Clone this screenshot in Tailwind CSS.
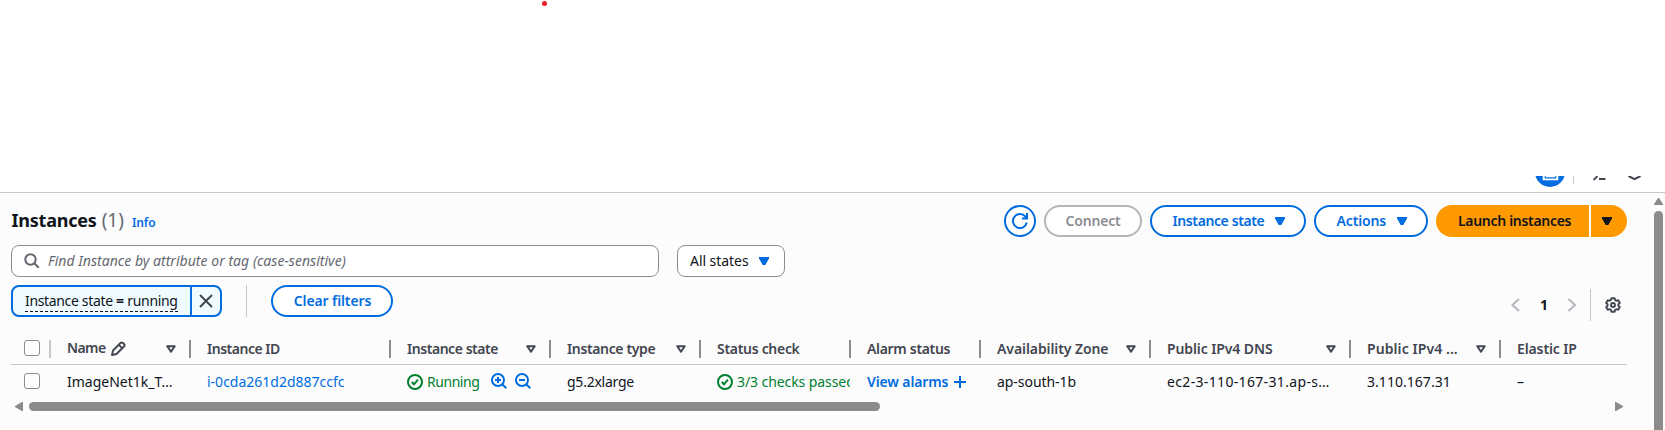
<!DOCTYPE html>
<html lang="en">
<head>
<meta charset="utf-8">
<title>Instances</title>
<script src="https://cdn.jsdelivr.net/npm/@tailwindcss/browser@4"></script>
</head>
<body class="w-[1665px] h-[430px] overflow-hidden bg-white font-['Noto_Sans',sans-serif] text-sm leading-5 text-[#0f141a]">
<svg width="0" height="0" class="absolute">
  <symbol id="down" viewBox="0 0 10 8"><path d="M0 0h10v1.500L6.300 8H3.700L0 1.500z" fill="currentColor"/></symbol>
  <symbol id="sort" viewBox="0 0 10 8"><path d="M1.300 1.200h7.400L5 6.800z" fill="none" stroke="currentColor" stroke-width="2" stroke-linejoin="round"/></symbol>
  <symbol id="ok" viewBox="0 0 16 16"><g fill="none" stroke="currentColor" stroke-width="2"><circle cx="8" cy="8" r="7"/><path d="M4.800 8l2.200 2.300 4-4.600"/></g></symbol>
</svg>

<!-- blank area above the console -->
<div class="h-[176px] pl-[542px] pt-px"><div class="size-[5px] rounded-full bg-[#ee1c25]"></div></div>

<!-- lower edge of the navigation bar -->
<div class="h-[17px] border-b border-[#c6c6cd] flex items-start pl-[1535px] overflow-hidden">
  <svg width="30" height="12" viewBox="0 0 30 12"><circle cx="15" cy="-4" r="15" fill="#006ce0"/><path d="M7.700 0h15.600v4.300H7.700z" fill="#fff"/><path d="M9.700 0v2.600h11.600V0h-1v1.200h-9.600V0z" fill="#006ce0"/></svg>
  <div class="w-px h-2 bg-[#c6c6cd] ml-2"></div>
  <svg class="ml-[18px]" width="15" height="6" viewBox="0 0 15 6" fill="none" stroke="#424650" stroke-width="1.800"><path d="M1.500 4L5.500 0M7 3h6.500"/></svg>
  <svg class="ml-[21px]" width="13" height="5" viewBox="0 0 13 5" fill="none" stroke="#424650" stroke-width="2"><path d="M.5 0L6.500 3.200L12.500 0"/></svg>
</div>

<main class="flex h-[237px] bg-[#fcfcfd]">
  <section class="ml-[11px] w-[1616px]">
    <!-- title and actions -->
    <div class="pt-3 flex h-11 items-center">
      <h1 class="text-[18px] font-bold leading-6 whitespace-pre -tracking-[0.22px] pl-[0.5px] -mt-0.5">Instances</h1>
      <span class="text-[19px] leading-6 text-[#656871] ml-[5px] -mt-0.5">(1)</span>
      <a class="text-xs font-semibold text-[#006ce0] ml-2 mt-1 -tracking-[0.1px]">Info</a>
      <div class="ml-auto flex gap-2 font-semibold text-[#006ce0]">
        <button class="size-8 rounded-full border-2 border-[#006ce0] bg-white flex items-center justify-center"><svg width="16" height="16" viewBox="0 0 16 16" fill="none" stroke="currentColor" stroke-width="2"><path d="M14.800 9.500A7 7 0 1 1 13.300 3.500L15 5.500"/><path d="M15 0v5.500h-5"/></svg></button>
        <button class="w-[98px] h-8 rounded-full border-2 border-[#b4b4bb] bg-white text-[#8c8c94] -tracking-[0.2px]">Connect</button>
        <button class="w-[156px] h-8 rounded-full border-2 border-[#006ce0] bg-white flex items-center pl-[20.500px]"><span class="-tracking-[0.39px] w-[102px] text-left">Instance state</span><svg width="10" height="8"><use href="#down"/></svg></button>
        <button class="w-[114px] h-8 rounded-full border-2 border-[#006ce0] bg-white flex items-center pl-[20.500px]"><span class="-tracking-[0.15px] w-[60.500px] text-left">Actions</span><svg width="10" height="8"><use href="#down"/></svg></button>
        <div class="flex gap-[2px] text-[#0f141a]">
          <button class="w-[153px] h-8 rounded-l-full bg-[#ff9900] -tracking-[0.3px] text-left pl-[22px]">Launch instances</button>
          <button class="w-9 h-8 rounded-r-full bg-[#ff9900] flex items-center pl-[11px]"><svg width="10" height="8"><use href="#down"/></svg></button>
        </div>
      </div>
    </div>

    <!-- search -->
    <div class="flex mt-2 gap-[18px]">
      <div class="w-[648px] h-8 rounded-lg border border-[#8c8c94] bg-white flex items-center pl-3 text-[#656871]">
        <svg width="16" height="16" viewBox="0 0 16 16" fill="none" stroke="currentColor" stroke-width="2"><circle cx="6.500" cy="6.500" r="5.200"/><path d="M10.300 10.300l4.500 4.500"/></svg>
        <span class="italic ml-2 tracking-[0.03px]">Find Instance by attribute or tag (case-sensitive)</span>
      </div>
      <div class="w-[108px] h-8 rounded-lg border border-[#8c8c94] bg-white flex items-center pl-3"><span class="w-[69px] -tracking-[0.05px]">All states</span><svg class="text-[#006ce0]" width="10" height="8"><use href="#down"/></svg></div>
    </div>

    <!-- filters and pagination -->
    <div class="flex mt-2 h-[49px]">
      <div class="w-[211px] h-8 rounded-lg border-2 border-[#006ce0] bg-[#f0fbff] flex overflow-hidden">
        <div class="w-[179px] border-r-2 border-[#006ce0] pl-3 pt-1"><span class="flex w-[153px] h-[21px] border-b border-dashed border-[#0f141a] whitespace-pre"><span class="-tracking-[0.34px]">Instance state </span><b class="font-bold">=</b><span class="-tracking-[0.34px]"> running</span></span></div>
        <svg class="mt-1.5 ml-1.5" width="16" height="16" viewBox="0 0 16 16" fill="none" stroke="#424650" stroke-width="2"><path d="M2 2l12 12M14 2L2 14"/></svg>
      </div>
      <div class="w-px h-8 bg-[#c6c6cd] ml-6"></div>
      <button class="w-[122px] h-8 ml-6 rounded-full border-2 border-[#006ce0] bg-white text-[#006ce0] font-semibold -tracking-[0.12px] pl-px">Clear filters</button>
      <div class="ml-auto mt-1 h-8 flex items-center">
        <svg width="10" height="14" viewBox="0 0 10 14" fill="none" stroke="#b4b4bb" stroke-width="2"><path d="M8 1L1.500 7l6.500 6"/></svg>
        <b class="w-[46px] text-center font-bold">1</b>
        <svg width="10" height="14" viewBox="0 0 10 14" fill="none" stroke="#b4b4bb" stroke-width="2"><path d="M1.500 1L8 7l-6.500 6"/></svg>
        <div class="w-px h-8 bg-[#c6c6cd] ml-[13px]"></div>
        <svg class="ml-3.5 mr-1.5" width="16" height="16" viewBox="0 0 16 16" fill="none" stroke="#424650" stroke-width="1.900" stroke-linejoin="round"><path d="M6.400 1.200h3.200l.5 1.900 1.200.7 1.900-.6 1.600 2.800-1.400 1.300v1.400l1.400 1.300-1.600 2.800-1.900-.6-1.200.7-.5 1.900H6.400l-.5-1.900-1.200-.7-1.900.6-1.600-2.800 1.400-1.300V7.300L1.200 6l1.600-2.800 1.900.6 1.200-.7z"/><circle cx="8" cy="8" r="2"/></svg>
      </div>
    </div>

    <!-- table header -->
    <div class="flex h-[31px] items-center border-b border-[#c6c6cd] font-semibold text-[#424650] whitespace-nowrap">
      <div class="w-10 h-[18px] border-r-2 border-[#c6c6cd] pl-[13px] flex items-start"><div class="size-4 rounded-[3px] border border-[#8c8c94] bg-white"></div></div>
      <div class="w-[140px] h-[18px] border-r-2 border-[#8c8c94] pl-4 pr-[13px] flex items-center"><span class="-tracking-[0.6px] -mt-0.5">Name</span><svg class="ml-1" width="16" height="16" viewBox="0 0 16 16" fill="none" stroke="currentColor" stroke-width="1.900" stroke-linejoin="round"><path d="M2 14l1-4.500L10.500 2a1.800 1.800 0 0 1 2.500 0l1 1a1.800 1.800 0 0 1 0 2.500L6.500 13zM8.800 3.800l3.400 3.400"/></svg><svg class="ml-auto" width="10" height="8"><use href="#sort"/></svg></div>
      <div class="w-[200px] h-[18px] border-r-2 border-[#8c8c94] pl-4 flex items-center"><span class="-tracking-[0.48px]">Instance ID</span></div>
      <div class="w-[160px] h-[18px] border-r-2 border-[#8c8c94] pl-4 pr-[13px] flex items-center justify-between"><span class="-tracking-[0.45px]">Instance state</span><svg width="10" height="8"><use href="#sort"/></svg></div>
      <div class="w-[150px] h-[18px] border-r-2 border-[#8c8c94] pl-4 pr-[13px] flex items-center justify-between"><span class="-tracking-[0.36px]">Instance type</span><svg width="10" height="8"><use href="#sort"/></svg></div>
      <div class="w-[150px] h-[18px] border-r-2 border-[#8c8c94] pl-4 flex items-center"><span class="-tracking-[0.3px]">Status check</span></div>
      <div class="w-[130px] h-[18px] border-r-2 border-[#8c8c94] pl-4 flex items-center"><span class="-tracking-[0.32px]">Alarm status</span></div>
      <div class="w-[170px] h-[18px] border-r-2 border-[#8c8c94] pl-4 pr-[13px] flex items-center justify-between"><span class="-tracking-[0.08px]">Availability Zone</span><svg width="10" height="8"><use href="#sort"/></svg></div>
      <div class="w-[200px] h-[18px] border-r-2 border-[#8c8c94] pl-4 pr-[13px] flex items-center justify-between"><span class="-tracking-[0.1px]">Public IPv4 DNS</span><svg width="10" height="8"><use href="#sort"/></svg></div>
      <div class="w-[150px] h-[18px] border-r-2 border-[#8c8c94] pl-4 pr-[13px] flex items-center justify-between"><span class="tracking-[0.08px]">Public IPv4 ...</span><svg width="10" height="8"><use href="#sort"/></svg></div>
      <div class="pl-4"><span class="-tracking-[0.12px]">Elastic IP</span></div>
    </div>

    <!-- table row -->
    <div class="flex h-[34px] items-center whitespace-nowrap">
      <div class="w-10 pl-[13px]"><div class="size-4 rounded-[3px] border border-[#8c8c94] bg-white -mt-0.5"></div></div>
      <div class="w-[140px] pl-4">ImageNet1k_T…</div>
      <div class="w-[200px] pl-4 text-[#006ce0]">i-0cda261d2d887ccfc</div>
      <div class="w-[160px] pl-4 flex items-center text-[#00802f]"><svg width="16" height="16"><use href="#ok"/></svg><span class="ml-1 w-[64px] -tracking-[0.45px]">Running</span>
        <svg class="text-[#006ce0] -mt-0.5 mr-2" width="16" height="16" viewBox="0 0 16 16" fill="none" stroke="currentColor" stroke-width="2"><circle cx="7" cy="7" r="6"/><path d="M11.300 11.300l4 4M4 7h6M7 4v6"/></svg>
        <svg class="text-[#006ce0] -mt-0.5" width="16" height="16" viewBox="0 0 16 16" fill="none" stroke="currentColor" stroke-width="2"><circle cx="7" cy="7" r="6"/><path d="M11.300 11.300l4 4M4 7h6"/></svg>
      </div>
      <div class="w-[150px] pl-4 -tracking-[0.24px]">g5.2xlarge</div>
      <div class="w-[149px] mr-px pl-4 flex items-center overflow-hidden text-[#00802f]"><svg class="shrink-0" width="16" height="16"><use href="#ok"/></svg><span class="ml-1 -tracking-[0.08px]">3/3 checks passed</span></div>
      <div class="w-[130px] pl-4 flex items-center font-semibold text-[#006ce0]"><span class="-tracking-[0.12px]">View alarms</span><svg class="ml-[5.500px]" width="12" height="12" viewBox="0 0 12 12" stroke="currentColor" stroke-width="2"><path d="M0 6h12M6 0v12"/></svg></div>
      <div class="w-[170px] pl-4 -tracking-[0.05px]">ap-south-1b</div>
      <div class="w-[200px] pl-4 tracking-[0.34px]">ec2-3-110-167-31.ap-s…</div>
      <div class="w-[150px] pl-4 tracking-[0.04px]">3.110.167.31</div>
      <div class="pl-4">–</div>
    </div>

    <!-- horizontal scrollbar -->
    <div class="flex mt-[3px] h-[9px] items-center pl-1 pr-1">
      <svg width="8" height="9" viewBox="0 0 8 9"><path d="M8 0v9H7L0 5V4L7 0z" fill="#8b8b8b"/></svg>
      <div class="ml-1.5 w-[851px] h-[9px] rounded-full bg-[#8b8b8b]"></div>
      <svg class="ml-auto" width="8" height="9" viewBox="0 0 8 9"><path d="M0 0v9h1l7-4V4L1 0z" fill="#8b8b8b"/></svg>
    </div>
  </section>

  <!-- vertical scrollbar -->
  <div class="ml-[27px] w-[9px] pt-[5px] flex flex-col">
    <svg width="9" height="7" viewBox="0 0 9 7"><path d="M0 7V6L4 0h1l4 6v1z" fill="#8b8b8b"/></svg>
    <div class="mt-1.5 flex-1 rounded-t-full bg-[#8b8b8b]"></div>
  </div>
</main>
</body>
</html>
